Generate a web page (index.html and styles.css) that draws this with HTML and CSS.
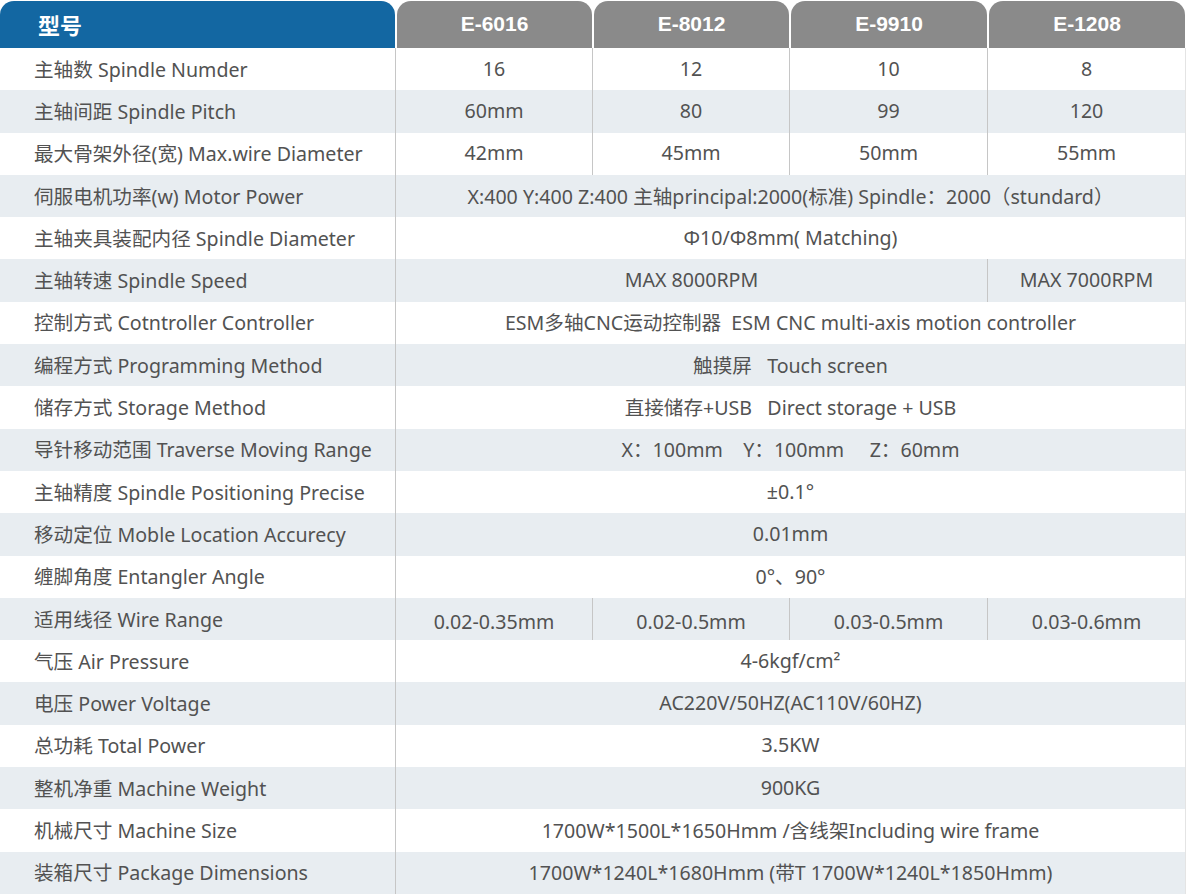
FILE: index.html
```html
<!DOCTYPE html>
<html lang="zh-CN">
<head>
    <meta charset="UTF-8">
    <title>E系列 参数表</title>
    <link rel="stylesheet" href="styles.css">
</head>
<body>
    <div class="spec-table">
        <div class="head head-label">型号</div>
        <div class="head head-model">E-6016</div>
        <div class="head head-model">E-8012</div>
        <div class="head head-model">E-9910</div>
        <div class="head head-model">E-1208</div>

        <div class="row">
            <div class="label">主轴数 Spindle Numder</div>
            <div class="val">16</div>
            <div class="val">12</div>
            <div class="val">10</div>
            <div class="val">8</div>
        </div>
        <div class="row alt">
            <div class="label">主轴间距 Spindle Pitch</div>
            <div class="val">60mm</div>
            <div class="val">80</div>
            <div class="val">99</div>
            <div class="val">120</div>
        </div>
        <div class="row">
            <div class="label">最大骨架外径(宽) Max.wire Diameter</div>
            <div class="val">42mm</div>
            <div class="val">45mm</div>
            <div class="val">50mm</div>
            <div class="val">55mm</div>
        </div>
        <div class="row alt">
            <div class="label">伺服电机功率(w) Motor Power</div>
            <div class="val span4">X:400 Y:400 Z:400 主轴principal:2000(标准) Spindle：2000（stundard）</div>
        </div>
        <div class="row">
            <div class="label">主轴夹具装配内径 Spindle Diameter</div>
            <div class="val span4">Φ10/Φ8mm( Matching)</div>
        </div>
        <div class="row alt">
            <div class="label">主轴转速 Spindle Speed</div>
            <div class="val span3">MAX 8000RPM</div>
            <div class="val">MAX 7000RPM</div>
        </div>
        <div class="row">
            <div class="label">控制方式 Cotntroller Controller</div>
            <div class="val span4">ESM多轴CNC运动控制器&nbsp; ESM CNC multi-axis motion controller</div>
        </div>
        <div class="row alt">
            <div class="label">编程方式 Programming Method</div>
            <div class="val span4">触摸屏&nbsp;&nbsp; Touch screen</div>
        </div>
        <div class="row">
            <div class="label">储存方式 Storage Method</div>
            <div class="val span4">直接储存+USB&nbsp;&nbsp; Direct storage + USB</div>
        </div>
        <div class="row alt">
            <div class="label">导针移动范围 Traverse Moving Range</div>
            <div class="val span4">X：100mm&nbsp;&nbsp;&nbsp; Y：100mm&nbsp;&nbsp;&nbsp;&nbsp; Z：60mm</div>
        </div>
        <div class="row">
            <div class="label">主轴精度 Spindle Positioning Precise</div>
            <div class="val span4">±0.1°</div>
        </div>
        <div class="row alt">
            <div class="label">移动定位 Moble Location Accurecy</div>
            <div class="val span4">0.01mm</div>
        </div>
        <div class="row">
            <div class="label">缠脚角度 Entangler Angle</div>
            <div class="val span4">0°、90°</div>
        </div>
        <div class="row alt">
            <div class="label">适用线径 Wire Range</div>
            <div class="val low">0.02-0.35mm</div>
            <div class="val low">0.02-0.5mm</div>
            <div class="val low">0.03-0.5mm</div>
            <div class="val low">0.03-0.6mm</div>
        </div>
        <div class="row">
            <div class="label">气压 Air Pressure</div>
            <div class="val span4">4-6kgf/cm²</div>
        </div>
        <div class="row alt">
            <div class="label">电压 Power Voltage</div>
            <div class="val span4">AC220V/50HZ(AC110V/60HZ)</div>
        </div>
        <div class="row">
            <div class="label">总功耗 Total Power</div>
            <div class="val span4">3.5KW</div>
        </div>
        <div class="row alt">
            <div class="label">整机净重 Machine Weight</div>
            <div class="val span4">900KG</div>
        </div>
        <div class="row">
            <div class="label">机械尺寸 Machine Size</div>
            <div class="val span4">1700W*1500L*1650Hmm /含线架Including wire frame</div>
        </div>
        <div class="row alt">
            <div class="label">装箱尺寸 Package Dimensions</div>
            <div class="val span4">1700W*1240L*1680Hmm (带T 1700W*1240L*1850Hmm)</div>
        </div>
    </div>
</body>
</html>
```

FILE: styles.css
```css
body {
    margin: 0;
    background-color: white;
    font-family: "Noto Sans", "Noto Sans CJK SC", sans-serif;
    color: #525252;
}
.spec-table {
    width: 1186px;
    height: 894px;
    display: grid;
    grid-template-columns: 396px 197px 197px 198px 198px;
    grid-template-rows: 47px repeat(20, 1fr);
    padding-top: 1px;
    box-sizing: border-box;
}
.head {
    display: flex;
    align-items: center;
    color: white;
    font-weight: bold;
    font-size: 21px;
    border-radius: 14px 14px 0 0;
    padding-bottom: 2px;
}
.head-label {
    background-color: #1367a2;
    padding-left: 38px;
    margin-right: 1px;
    font-family: "Noto Sans CJK SC", sans-serif;
    font-size: 22px;
}
.head-model {
    background-color: #8a8a8a;
    justify-content: center;
    margin-left: 1px;
    margin-right: 1px;
    font-family: "Liberation Sans", Arial, sans-serif;
}
.head-model:last-child {
    margin-right: 2px;
}
.row {
    display: contents;
}
.label,
.val {
    display: flex;
    align-items: center;
    font-size: 19.6px;
    white-space: nowrap;
    padding-bottom: 2px;
}
.label {
    padding-left: 34px;
    border-right: 1px solid #c6c6c6;
}
.val {
    justify-content: center;
    border-right: 1px solid #c6c6c6;
}
.val:last-child {
    border-right-color: #e4e4e4;
}
.val.low {
    padding-top: 4px;
    padding-bottom: 0;
}
.span3 { grid-column: span 3; }
.span4 { grid-column: span 4; }
.row.alt .label,
.row.alt .val {
    background-color: #e8edf1;
}
```
